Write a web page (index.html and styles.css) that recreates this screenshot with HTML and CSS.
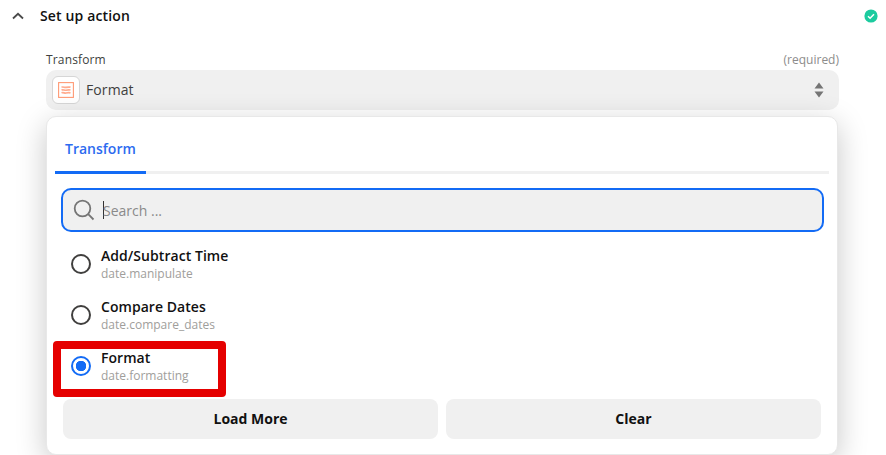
FILE: index.html
```html
<!DOCTYPE html>
<html lang="en">
<head>
<meta charset="utf-8">
<title>Set up action</title>
<link rel="stylesheet" href="styles.css">
</head>
<body>
<main class="page">
  <header class="head">
    <svg class="chev" width="14" height="10" viewBox="0 0 14 10"><path d="M2 7.500 7 2.800l5 4.700" fill="none" stroke="#4a4a4a" stroke-width="1.800"/></svg>
    <h1 class="title">Set up action</h1>
    <svg class="ok" width="14" height="14" viewBox="0 0 14 14"><circle cx="7" cy="7" r="6.600" fill="#1ccb9f"/><path d="M4 7.200 6.100 9.200 10 5.200" fill="none" stroke="#fff" stroke-width="1.500"/></svg>
  </header>
  <section class="form">
    <div class="labels"><span class="label">Transform</span><span class="req">(required)</span></div>
    <div class="select">
      <span class="app">
        <svg width="16" height="16" viewBox="0 0 16 16"><rect x=".6" y=".6" width="14.800" height="14.800" fill="#fff" stroke="#ff9a75" stroke-width="1.100"/><path d="M3.500 5.200c2-.8 3 .6 4.500.2s2.500-.6 4.500-.2M3.500 8c2-.8 3 .6 4.500.2s2.500-.6 4.500-.2M3.500 10.800c2-.8 3 .6 4.500.2s2.500-.6 4.500-.2" fill="none" stroke="#ffab8e" stroke-width="1.700"/></svg>
      </span>
      <span class="value">Format</span>
      <svg class="updown" width="10" height="16" viewBox="0 0 10 16"><path d="M5 .5 9.500 6.500H.5zM5 15.500.5 9.500h9z" fill="#757575"/></svg>
    </div>
    <div class="popup">
      <nav class="tabs"><span class="tab">Transform</span></nav>
      <div class="search">
        <svg width="22" height="22" viewBox="0 0 22 22"><circle cx="9.500" cy="9.500" r="7.800" fill="none" stroke="#757575" stroke-width="1.800"/><path d="m15.200 15.200 5.300 5.300" stroke="#757575" stroke-width="1.800"/></svg>
        <span class="caret"></span><span class="ph">Search ...</span>
      </div>
      <ul class="list">
        <li class="item"><span class="radio"></span><div><div class="name">Add/Subtract Time</div><div class="key">date.manipulate</div></div></li>
        <li class="item"><span class="radio"></span><div><div class="name">Compare Dates</div><div class="key">date.compare_dates</div></div></li>
        <li class="item"><span class="radio on"></span><div><div class="name">Format</div><div class="key">date.formatting</div></div></li>
      </ul>
      <div class="btns"><button class="btn">Load More</button><button class="btn">Clear</button></div>
      <div class="mark"></div>
    </div>
  </section>
</main>
</body>
</html>
```
FILE: styles.css
```css
* { box-sizing: border-box; }
html, body { margin: 0; height: 100%; overflow: hidden; background: #fff; }
body { font-family: "Open Sans", sans-serif; color: #111; }
.page { height: 455px; overflow: hidden; }
.head { display: flex; align-items: center; height: 32px; padding: 0 8px 0 11px; }
.chev { margin-right: 15px; }
.title { flex: 1; margin: 0 0 2px; font-size: 14px; font-weight: 600; letter-spacing: .15px; color: #111; }
.form { margin: 20px 47px 0 46px; }
.labels { display: flex; justify-content: space-between; align-items: center; height: 14px; font-size: 12px; }
.label { color: #403f3e; letter-spacing: .15px; }
.req { color: #8d8c8b; }
.select { display: flex; align-items: center; height: 40px; margin-top: 4px; padding: 0 15px 0 6px; background: #f0f0f0; border-radius: 10px; }
.app { display: flex; align-items: center; justify-content: center; width: 28px; height: 28px; background: #fff; border: 1px solid #d6d6d6; border-radius: 6px; }
.value { flex: 1; margin: -1px 0 0 6px; font-size: 14px; font-weight: 500; letter-spacing: .1px; color: #403f3e; }
.popup { position: relative; width: 792px; height: 339px; margin: 6px 0 0 0; background: #fff; border: 1px solid #e8e8e8; border-radius: 10px; box-shadow: 0 8px 30px rgba(0,0,0,.22); padding: 0 8px; }
.tabs { height: 57px; border-bottom: 3px solid #f0f0f0; }
.tab { display: inline-block; height: 57px; padding: 22px 10px 0; font-size: 14px; font-weight: 600; color: #2d6bf0; border-bottom: 3px solid #136bf5; }
.search { display: flex; align-items: center; height: 44px; margin: 14px 5px 0 6px; padding: 0 10px; background: #f0f0f0; border: 2px solid #136bf5; border-radius: 10px; }
.caret { width: 1px; height: 18px; margin: 0 -1px 0 8px; background: #333; }
.ph { font-size: 14px; color: #8a8a8a; }
.list { list-style: none; margin: 7px 0 0; padding: 0; }
.item { display: flex; align-items: center; height: 51px; padding-left: 16px; }
.radio { flex: none; width: 20px; height: 20px; margin: 0 10px 2px 0; border: 2px solid #403f3e; border-radius: 50%; }
.radio.on { border-color: #136bf5; background: radial-gradient(circle, #136bf5 0 5px, #fff 5.500px); }
.name { font-size: 14px; font-weight: 560; line-height: 18px; letter-spacing: .05px; color: #111; }
.key { font-size: 12px; line-height: 16px; margin-top: 1px; color: #a09e9b; }
.btns { display: grid; grid-template-columns: 375px 375px; gap: 8px; margin: 7px 0 0 8px; }
.btn { height: 40px; padding: 0 0 2px; border: 0; border-radius: 8px; background: #f0f0f0; font: 700 14px "Open Sans", sans-serif; color: #111; }
.mark { position: absolute; left: 6px; top: 224px; width: 173px; height: 56px; border: 8px solid #e50000; border-radius: 4px; }
```
